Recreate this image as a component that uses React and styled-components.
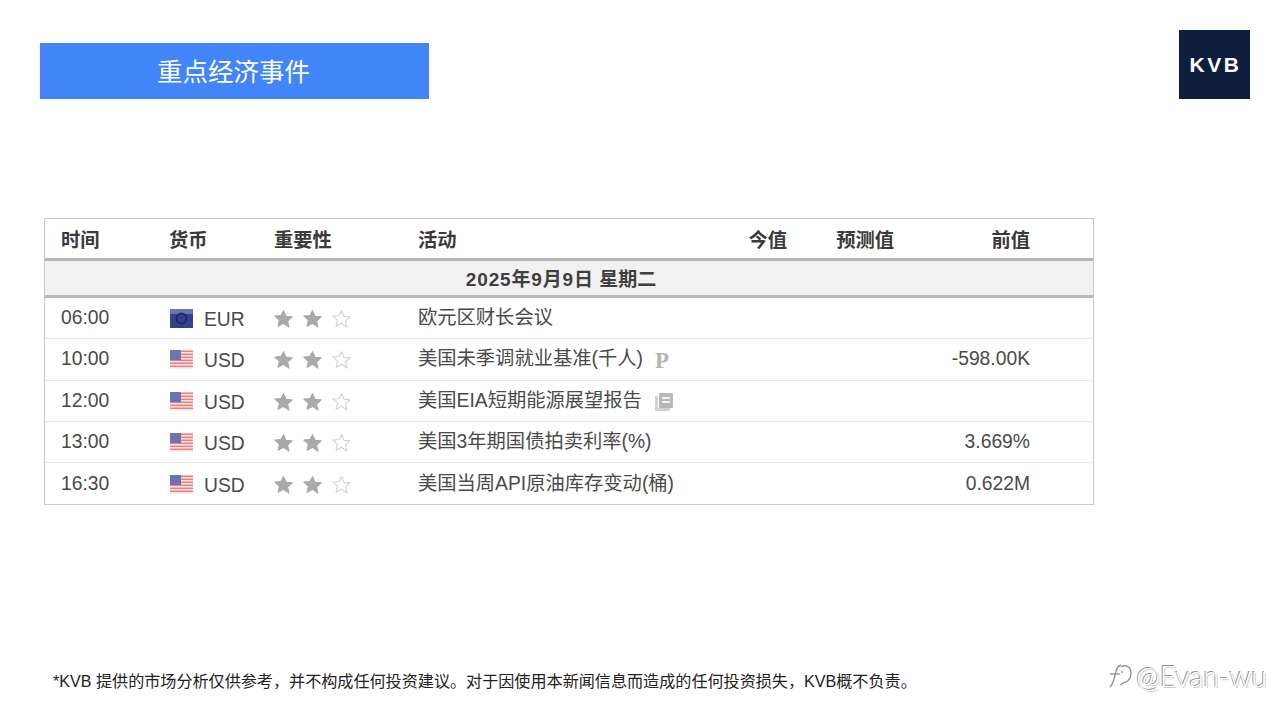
import styled, { createGlobalStyle } from "styled-components";

const GlobalStyle = createGlobalStyle`
  * {
    box-sizing: border-box;
  }
  body {
    margin: 0;
    background: #fff;
    font-family: "Liberation Sans", "Noto Sans CJK SC", sans-serif;
  }
`;

const Page = styled.div`
  width: 1280px;
  height: 718px;
  padding-top: 30px;
  display: flex;
  flex-direction: column;
  overflow: hidden;
`;

const TopBar = styled.header`
  display: flex;
  justify-content: space-between;
  align-items: flex-start;
  padding: 0 30px 0 40px;
`;

const Banner = styled.h1`
  width: 389px;
  height: 56px;
  margin: 13px 0 0;
  padding-right: 2px;
  background: #4285f8;
  color: #fff;
  font-size: 25.5px;
  font-weight: 400;
  line-height: 58px;
  text-align: center;
`;

const Logo = styled.div`
  width: 71px;
  height: 69px;
  padding-left: 2px;
  background: #101e3d;
  color: #fff;
  font-size: 21px;
  font-weight: 700;
  letter-spacing: 2.6px;
  line-height: 69px;
  text-align: center;
`;

const Table = styled.table`
  width: 1050px;
  margin: 119px 0 0 44px;
  border: 1px solid #c9c9c9;
  border-collapse: separate;
  border-spacing: 0;
  table-layout: fixed;
  color: #4a4a4a;
  font-size: 19.3px;
`;

const HeadCell = styled.th`
  height: 42px;
  padding: ${(p) => (p.$right ? "0 16px 0 0" : "0 0 0 16px")};
  border-bottom: 3px solid #b4b4b4;
  color: #3a3a3a;
  font-size: 19.3px;
  font-weight: 700;
  text-align: ${(p) => (p.$right ? "right" : "left")};
`;

const DateCell = styled.td`
  height: 37px;
  padding: 0 16px 2px 0;
  background: #f1f1f1;
  border-bottom: 3px solid #b9b9b9;
  color: #3f3f3f;
  font-weight: 700;
  font-size: 19px;
  text-align: center;
`;

const DatePart = styled.span`
  letter-spacing: 0.85px;
`;

const Cell = styled.td`
  height: 41.25px;
  padding: ${(p) => (p.$right ? "0 16px 0 0" : "0 0 0 16px")};
  border-bottom: ${(p) => (p.$last ? "none" : "1px solid #e9e9e9")};
  text-align: ${(p) => (p.$right ? "right" : "left")};
  white-space: nowrap;
`;

const Currency = styled.div`
  display: flex;
  align-items: center;
  gap: 11px;
  margin-left: 1px;
  padding-top: 1px;
`;

const CurrencyCode = styled.span`
  padding-top: 3px;
`;

const Stars = styled.div`
  display: flex;
  gap: 8px;
  margin-left: -1px;
  padding-top: 2px;
`;

const EventName = styled.span`
  position: relative;
  top: -2px;
`;

const PMark = styled.span`
  margin-left: 12px;
  color: #b4b4b4;
  font-family: "Liberation Serif", serif;
  font-size: 23px;
  font-weight: 700;
  position: relative;
  top: 1px;
`;

const DocMark = styled.svg`
  margin-left: 12px;
  vertical-align: -3px;
`;

const Footer = styled.footer`
  margin-top: auto;
  height: 64px;
  padding: 0 13px 12px 53px;
  display: flex;
  justify-content: space-between;
  align-items: center;
`;

const Disclaimer = styled.p`
  margin: 0;
  color: #222;
  font-size: 16.1px;
`;

const Watermark = styled.div`
  display: flex;
  align-items: center;
  gap: 3px;
  margin-bottom: 9px;
  color: #fff;
  font-size: 28.5px;
  font-weight: 300;
  font-family: "Lato", "Liberation Sans", sans-serif;
  text-shadow: -1px -1px 0 #8f8f8f, 1px 1px 0 #cfcfcf;
`;

const StarIcon = ({ filled }) => (
  <svg width="21" height="20" viewBox="0 0 24 24">
    <path
      d="M12 2l3 6.8 7.4.7-5.6 4.9 1.7 7.3L12 17l-6.5 3.7 1.7-7.3L1.600 8.500 9 7.800z"
      fill={filled ? "#a9a9a9" : "#fff"}
      stroke={filled ? "#a9a9a9" : "#d4d4d4"}
      strokeWidth="1.4"
      strokeLinejoin="round"
    />
  </svg>
);

const FlagEU = () => (
  <svg width="23" height="19" viewBox="0 0 23 19">
    <rect width="23" height="19" fill="#34418c" />
    <rect width="23" height="5" fill="#6d76ad" />
    <circle cx="11.500" cy="9.500" r="5" fill="none" stroke="#1e2a6e" strokeWidth="2" />
  </svg>
);

const FlagUS = () => (
  <svg width="23" height="19" viewBox="0 0 23 19">
    <rect width="23" height="19" fill="#fbeeee" />
    {[0, 3, 6, 9, 12, 15].map((y) => (
      <rect key={y} y={y + 0.500} width="23" height="1.600" fill="#ea7f80" />
    ))}
    <rect width="11" height="10" fill="#6a74b4" />
  </svg>
);

const DocIcon = () => (
  <DocMark width="20" height="20" viewBox="0 0 20 20">
    <rect x="1" y="4" width="3" height="15" fill="#d2d2d2" />
    <rect x="1" y="16" width="15" height="3" fill="#d2d2d2" />
    <rect x="5" y="1" width="14" height="15" rx="1" fill="#b8b8b8" />
    <rect x="8" y="5" width="8" height="2" fill="#f2f2f2" />
    <rect x="8" y="9" width="8" height="2" fill="#f2f2f2" />
  </DocMark>
);

const ZhihuMark = () => (
  <svg width="26" height="28" viewBox="0 0 26 28" fill="none" stroke="#8f8f8f" strokeWidth="1.300">
    <path d="M3 25c3-3 4-7 5-12s2-9 6-10" />
    <path d="M3 12h10" />
    <path d="M14 5c5-3 10 0 10 6s-3 9-8 10l-3 2" />
    <path d="M15 9v2" />
  </svg>
);

const headers = [
  { label: "时间", width: 108 },
  { label: "货币", width: 105 },
  { label: "重要性", width: 144 },
  { label: "活动", width: 280 },
  { label: "今值", width: 121, right: true },
  { label: "预测值", width: 107, right: true },
  { label: "前值", width: 136, right: true },
  { label: "", width: 47 },
];

const events = [
  { time: "06:00", currency: "EUR", name: "欧元区财长会议" },
  { time: "10:00", currency: "USD", name: "美国未季调就业基准(千人)", mark: "p", prev: "-598.00K" },
  { time: "12:00", currency: "USD", name: "美国EIA短期能源展望报告", mark: "doc" },
  { time: "13:00", currency: "USD", name: "美国3年期国债拍卖利率(%)", prev: "3.669%" },
  { time: "16:30", currency: "USD", name: "美国当周API原油库存变动(桶)", prev: "0.622M" },
];

export default function App() {
  return (
    <Page>
      <GlobalStyle />
      <TopBar>
        <Banner>重点经济事件</Banner>
        <Logo>KVB</Logo>
      </TopBar>
      <Table>
        <colgroup>
          {headers.map((h, i) => (
            <col key={i} style={{ width: h.width }} />
          ))}
        </colgroup>
        <thead>
          <tr>
            {headers.map((h, i) => (
              <HeadCell key={i} $right={h.right}>
                {h.label}
              </HeadCell>
            ))}
          </tr>
        </thead>
        <tbody>
          <tr>
            <DateCell colSpan={8}>
              <DatePart>2025年9月9日</DatePart> 星期二
            </DateCell>
          </tr>
          {events.map((e, i) => {
            const last = i === events.length - 1;
            return (
              <tr key={e.time}>
                <Cell $last={last}>{e.time}</Cell>
                <Cell $last={last}>
                  <Currency>
                    {e.currency === "EUR" ? <FlagEU /> : <FlagUS />}
                    <CurrencyCode>{e.currency}</CurrencyCode>
                  </Currency>
                </Cell>
                <Cell $last={last}>
                  <Stars>
                    <StarIcon filled />
                    <StarIcon filled />
                    <StarIcon />
                  </Stars>
                </Cell>
                <Cell $last={last}>
                  <EventName>{e.name}</EventName>
                  {e.mark === "p" && <PMark>P</PMark>}
                  {e.mark === "doc" && <DocIcon />}
                </Cell>
                <Cell $last={last} $right />
                <Cell $last={last} $right />
                <Cell $last={last} $right>
                  {e.prev}
                </Cell>
                <Cell $last={last} />
              </tr>
            );
          })}
        </tbody>
      </Table>
      <Footer>
        <Disclaimer>*KVB 提供的市场分析仅供参考，并不构成任何投资建议。对于因使用本新闻信息而造成的任何投资损失，KVB概不负责。</Disclaimer>
        <Watermark>
          <ZhihuMark />
          @Evan-wu
        </Watermark>
      </Footer>
    </Page>
  );
}
